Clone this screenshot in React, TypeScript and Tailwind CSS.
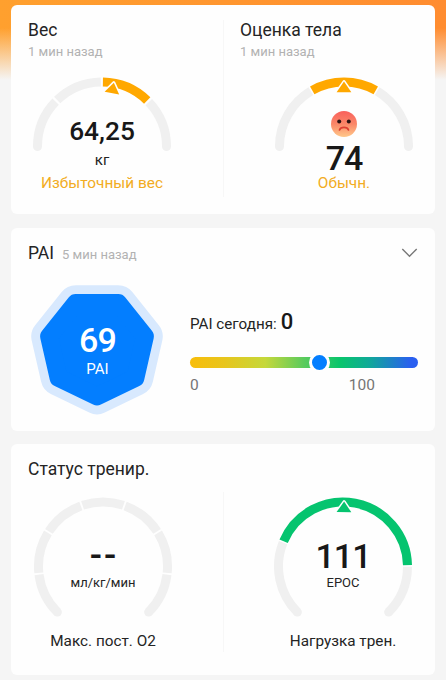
import React from "react";

type Segment = { from: number; to: number; color: string };

const TRACK = "#f0f0f0";
const AMBER = "#ffa800";
const GREEN = "#05c46f";
const CX = 70;
const CY = 69.5;
const R = 64.5;

// Angles are in degrees, clockwise from twelve o'clock.
function point(angle: number, radius = R) {
  const a = (angle * Math.PI) / 180;
  return { x: CX + radius * Math.sin(a), y: CY - radius * Math.cos(a) };
}

function arc(from: number, to: number) {
  const a = point(from);
  const b = point(to);
  return `M${a.x} ${a.y}A${R} ${R} 0 ${to - from > 180 ? 1 : 0} 1 ${b.x} ${b.y}`;
}

type GaugeProps = {
  segments: Segment[];
  height: number;
  pointer?: { angle: number; color: string };
  children: React.ReactNode;
};

function Gauge({ segments, height, pointer, children }: GaugeProps) {
  const first = point(segments[0].from);
  const last = point(segments[segments.length - 1].to);
  return (
    <div className="grid w-[140px]">
      <svg className="[grid-area:1/1]" width="140" height={height} fill="none">
        {segments.map((s) => (
          <path key={s.from} d={arc(s.from, s.to)} stroke={s.color} strokeWidth="9" />
        ))}
        <circle cx={first.x} cy={first.y} r="4.5" fill={segments[0].color} />
        <circle cx={last.x} cy={last.y} r="4.5" fill={segments[segments.length - 1].color} />
        {pointer && (
          <path
            d="M70 4.6L77.4 15.2H62.6Z"
            transform={`rotate(${pointer.angle} ${CX} ${CY})`}
            fill={pointer.color}
            stroke="#fff"
            strokeWidth="3"
            strokeLinejoin="round"
            paintOrder="stroke"
          />
        )}
      </svg>
      <div className="flex flex-col items-center whitespace-nowrap [grid-area:1/1]">{children}</div>
    </div>
  );
}

const weight: Segment[] = [
  { from: -90, to: -46, color: TRACK },
  { from: -44, to: -1, color: TRACK },
  { from: 0.8, to: 44.5, color: AMBER },
  { from: 46.5, to: 90, color: TRACK },
];

const body: Segment[] = [
  { from: -90, to: -31, color: TRACK },
  { from: -29.5, to: 29.5, color: AMBER },
  { from: 31, to: 90, color: TRACK },
];

const STEP = 270 / 7;
const oxygen: Segment[] = Array.from({ length: 7 }, (_, i) => ({
  from: -135 + i * STEP + (i === 0 ? 0 : 0.8),
  to: -135 + (i + 1) * STEP - (i === 6 ? 0 : 0.8),
  color: TRACK,
}));

const load: Segment[] = [
  { from: -135, to: -68.3, color: TRACK },
  { from: -67, to: 88.7, color: GREEN },
  { from: 90.2, to: 135, color: TRACK },
];

function heptagon(r: number) {
  return Array.from({ length: 7 }, (_, i) => {
    const a = (i * 2 * Math.PI) / 7;
    return `${66 + r * Math.sin(a)},${63.3 + r * Math.cos(a)}`;
  }).join(" ");
}

function SadFace() {
  return (
    <svg width="26" height="26" viewBox="0 0 26 26" fill="none">
      <defs>
        <linearGradient id="face" x1="0" y1="0" x2="0" y2="1">
          <stop offset="0" stopColor="#f9605c" />
          <stop offset="0.5" stopColor="#fa8768" />
          <stop offset="1" stopColor="#ffc88a" />
        </linearGradient>
      </defs>
      <circle cx="13" cy="13" r="13" fill="url(#face)" />
      <circle cx="8.2" cy="10.5" r="2" fill="#2c1414" />
      <circle cx="17.8" cy="10.5" r="2" fill="#2c1414" />
      <path d="M8.5 19C9.6 15.6 16.4 15.6 17.5 19" stroke="#dc3f32" strokeWidth="1.7" strokeLinecap="round" />
    </svg>
  );
}

export default function App() {
  return (
    <div className="h-[680px] w-[446px] overflow-hidden bg-[#f5f5f5] font-['Roboto','Noto_Sans',sans-serif] text-[#242424]">
      <div className="h-full bg-[linear-gradient(to_bottom,transparent_0,transparent_28px,#f5f5f5_80px),linear-gradient(to_right,#ffa02e,#ff8c30)] px-[11px] pt-[5px]">
        <section className="grid h-[209px] grid-cols-2 rounded-[6px] bg-[#fefefe] pt-[15px]">
          <div className="pl-[17px]">
            <h2 className="text-[17.5px] leading-5">Вес</h2>
            <p className="mt-1 text-[13px] leading-4 text-[#b2b2b2]">1 мин назад</p>
            <div className="mt-[17px] ml-1">
              <Gauge segments={weight} height={76} pointer={{ angle: 10.5, color: AMBER }}>
                <div className="pt-[39px] text-[26.3px] leading-[30px] font-medium text-[#181818]">64,25</div>
                <div className="mt-[4px] text-[15px] leading-5">кг</div>
                <div className="mt-[3px] text-[15.4px] leading-5 text-[#f2ac22]">Избыточный вес</div>
              </Gauge>
            </div>
          </div>
          <div className="mb-[17px] border-l border-[#f7f7f7] pl-[16px]">
            <h2 className="text-[17.5px] leading-5">Оценка тела</h2>
            <p className="mt-1 text-[13px] leading-4 text-[#b2b2b2]">1 мин назад</p>
            <div className="mt-[17px] ml-[34px]">
              <Gauge segments={body} height={76} pointer={{ angle: 0, color: AMBER }}>
                <div className="pt-[34px]">
                  <SadFace />
                </div>
                <div className="mt-[6px] text-[34px] leading-[30px] font-medium tracking-[-1px] text-[#181818]">74</div>
                <div className="text-[15.4px] leading-5 text-[#f2ac22]">Обычн.</div>
              </Gauge>
            </div>
          </div>
        </section>

        <section className="mt-[14px] h-[203px] rounded-[6px] bg-[#fefefe] px-[17px] pt-[15px]">
          <div className="flex items-baseline">
            <h2 className="text-[17.5px] leading-5">PAI</h2>
            <span className="ml-[8px] text-[13px] leading-5 text-[#b2b2b2]">5 мин назад</span>
            <svg className="mt-[4px] ml-auto self-start" width="18" height="12" fill="none">
              <path d="M2.3 2L9.5 9.2L16.7 2" stroke="#777" strokeWidth="1.4" />
            </svg>
          </div>
          <div className="mt-[19px] flex">
            <div className="ml-[3px] grid w-[132px]">
              <svg className="[grid-area:1/1]" width="132" height="134">
                <polygon points={heptagon(49)} fill="#d8e9fe" stroke="#d8e9fe" strokeWidth="36" strokeLinejoin="round" />
                <polygon points={heptagon(49.1)} fill="#037eff" stroke="#037eff" strokeWidth="18" strokeLinejoin="round" />
              </svg>
              <div className="flex flex-col items-center pt-[39px] pl-px text-white [grid-area:1/1]">
                <div className="text-[34px] leading-[34px] font-medium tracking-[-0.7px]">69</div>
                <div className="mt-[2px] text-[15px] leading-5">PAI</div>
              </div>
            </div>
            <div className="ml-[27px] w-[229px] pt-[24px]">
              <div className="flex items-baseline gap-[4px]">
                <span className="text-[15.2px] leading-7">PAI сегодня:</span>
                <span className="text-[22px] leading-7 font-medium text-[#181818]">0</span>
              </div>
              <div className="mt-[19px] flex h-[11px] items-center rounded-full bg-[linear-gradient(to_right,#f8bd0a_0%,#e8c51c_15%,#c5d83a_33%,#5acb5d_50%,#08c56c_66%,#0fab96_78%,#2a5ff0_97%)]">
                <div className="ml-[119px] size-[21px] shrink-0 rounded-full border-[3px] border-[#fefefe] bg-[#037eff]" />
              </div>
              <div className="mt-[7px] flex text-[15.5px] leading-5 text-[#757575]">
                <span>0</span>
                <span className="ml-[150px]">100</span>
              </div>
            </div>
          </div>
        </section>

        <section className="mt-[13px] h-[231px] rounded-[6px] bg-[#fefefe] px-[17px] pt-[15px]">
          <h2 className="text-[17.5px] leading-5">Статус тренир.</h2>
          <div className="mt-[13px] flex h-[160px]">
            <div className="w-[195px]">
              <div className="mt-[5px] ml-[5px]">
                <Gauge segments={oxygen} height={121}>
                  <div className="pt-[43px] pl-[2px] text-[36px] leading-[33px] font-medium tracking-[2px] text-[#181818]">--</div>
                  <div className="mt-[2px] text-[13px] leading-4">мл/кг/мин</div>
                  <div className="mt-[40px] text-[15.3px] leading-5">Макс. пост. O2</div>
                </Gauge>
              </div>
            </div>
            <div className="border-l border-[#f7f7f7]">
              <div className="mt-[5px] ml-[49px]">
                <Gauge segments={load} height={121} pointer={{ angle: 1, color: GREEN }}>
                  <div className="pt-[42px] text-[34px] leading-[34px] font-medium tracking-[-1px] text-[#181818]">111</div>
                  <div className="mt-[2px] text-[13px] leading-4">EPOC</div>
                  <div className="mt-[40px] text-[15.3px] leading-5">Нагрузка трен.</div>
                </Gauge>
              </div>
            </div>
          </div>
        </section>
      </div>
    </div>
  );
}
